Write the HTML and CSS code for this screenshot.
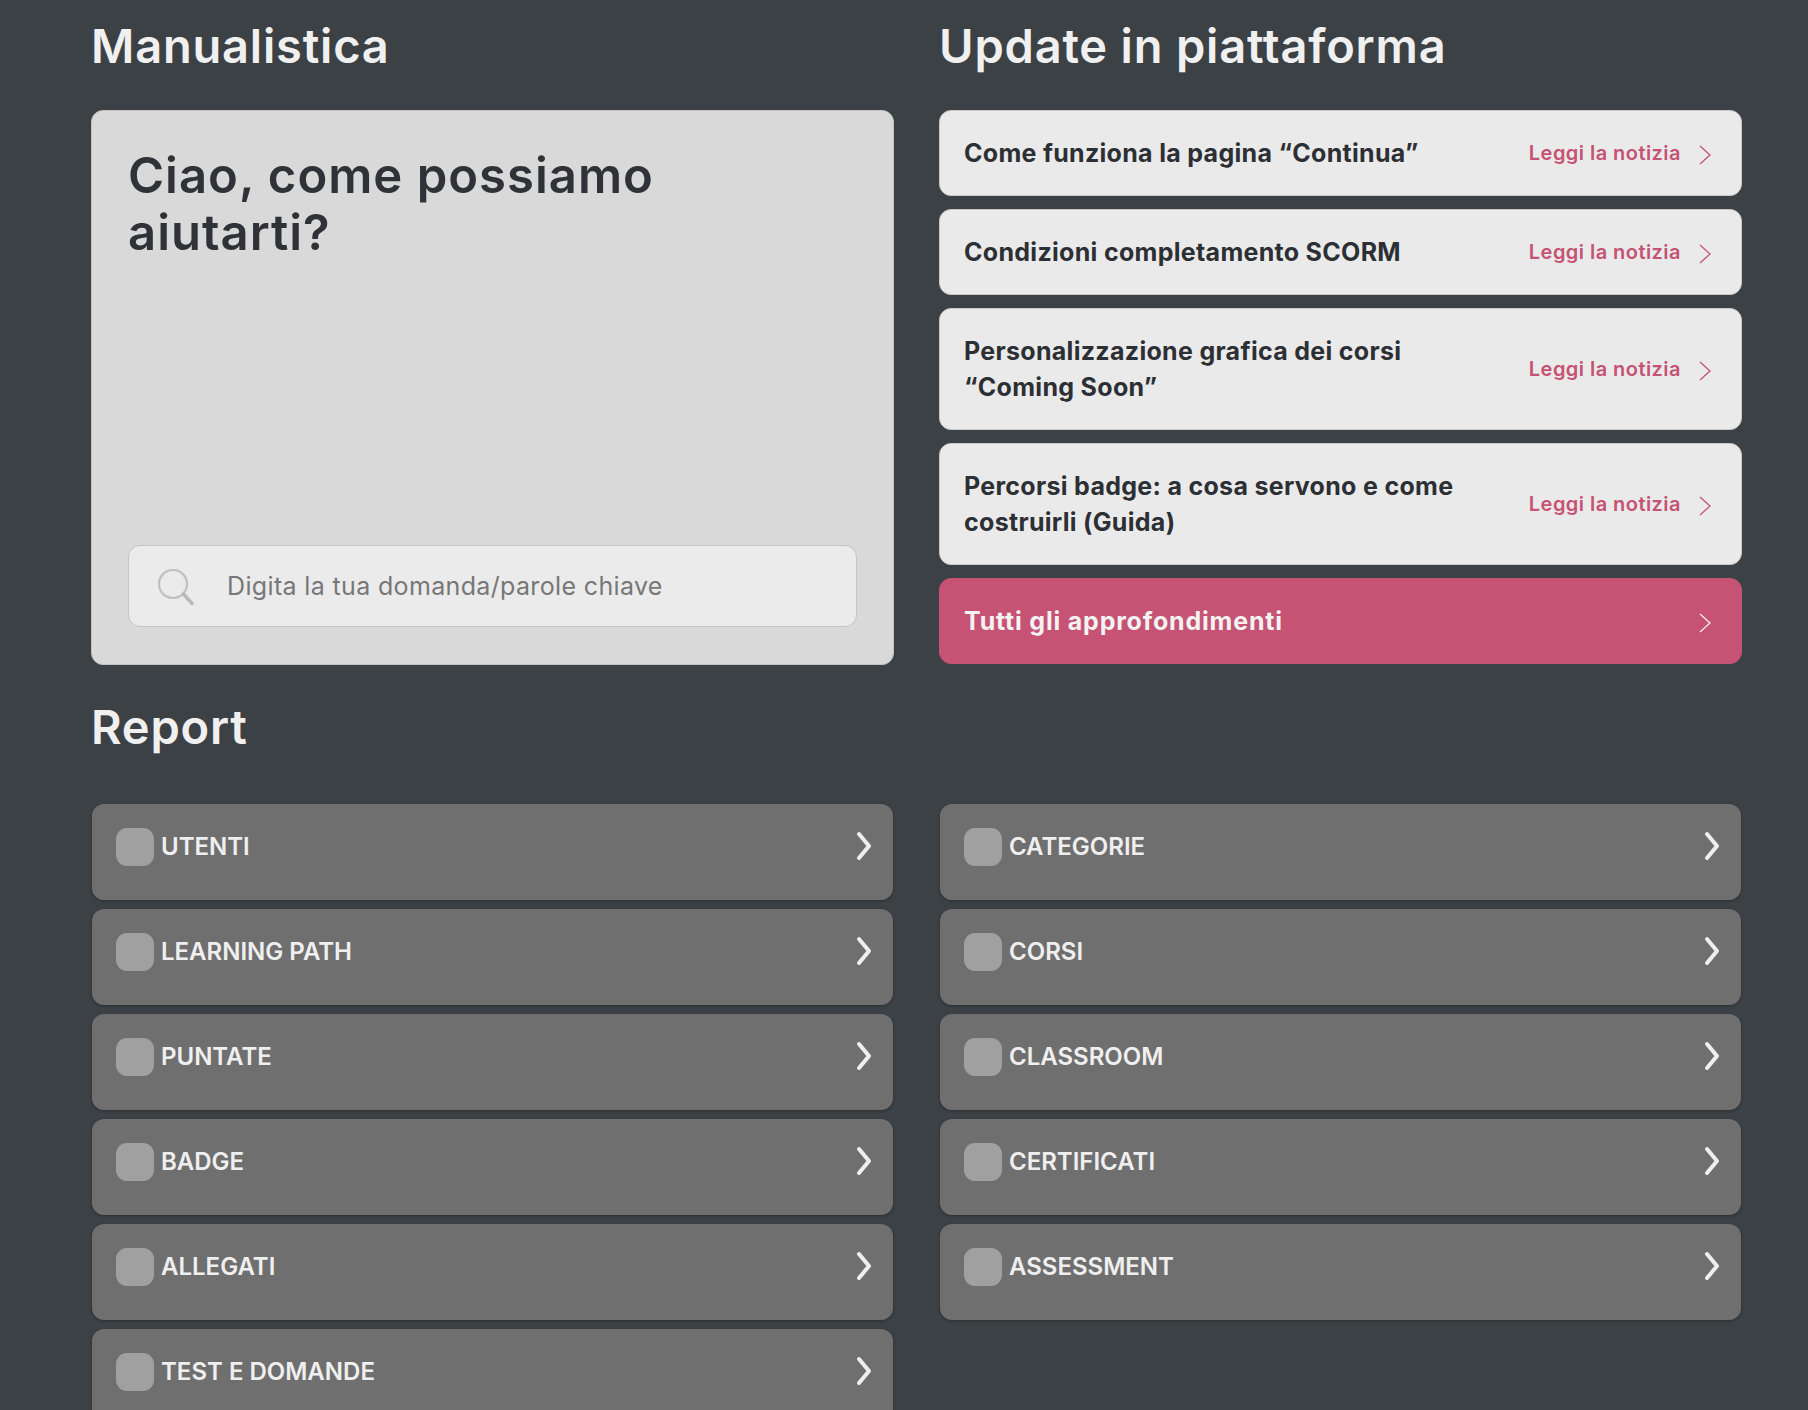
FILE: index.html
```html
<!DOCTYPE html>
<html lang="it">
<head>
  <meta charset="UTF-8" />
  <title>Manualistica</title>
  <link rel="stylesheet" href="styles.css">
</head>
<body>
  <div class="container">
    <section class="col">
      <h2>Manualistica</h2>
      <div class="help-card">
        <h1>Ciao, come possiamo aiutarti?</h1>
        <div class="search">
          <svg class="search-icon" viewBox="0 0 36 36" width="36" height="36"><circle cx="15" cy="15" r="14" fill="none" stroke="#c0c0c0" stroke-width="2.2"/><path d="M25.5 25 L34 34.5" stroke="#b8b8b8" stroke-width="3.5" stroke-linecap="round" fill="none"/></svg>
          <span>Digita la tua domanda/parole chiave</span>
        </div>
      </div>
    </section>
    <section class="col">
      <h2>Update in piattaforma</h2>
      <div class="news">
        <a class="news-item"><strong>Come funziona la pagina “Continua”</strong><span class="read">Leggi la notizia</span><svg class="chev" viewBox="0 0 12 20" width="12" height="20"><path d="M1 1 L11 10 L1 19" fill="none" stroke="currentColor" stroke-width="1.3"/></svg></a>
        <a class="news-item"><strong>Condizioni completamento SCORM</strong><span class="read">Leggi la notizia</span><svg class="chev" viewBox="0 0 12 20" width="12" height="20"><path d="M1 1 L11 10 L1 19" fill="none" stroke="currentColor" stroke-width="1.3"/></svg></a>
        <a class="news-item"><strong>Personalizzazione grafica dei corsi “Coming Soon”</strong><span class="read">Leggi la notizia</span><svg class="chev" viewBox="0 0 12 20" width="12" height="20"><path d="M1 1 L11 10 L1 19" fill="none" stroke="currentColor" stroke-width="1.3"/></svg></a>
        <a class="news-item"><strong>Percorsi badge: a cosa servono e come costruirli (Guida)</strong><span class="read">Leggi la notizia</span><svg class="chev" viewBox="0 0 12 20" width="12" height="20"><path d="M1 1 L11 10 L1 19" fill="none" stroke="currentColor" stroke-width="1.3"/></svg></a>
        <a class="news-item all"><strong>Tutti gli approfondimenti</strong><svg class="chev" viewBox="0 0 12 20" width="12" height="20"><path d="M1 1 L11 10 L1 19" fill="none" stroke="currentColor" stroke-width="1.3"/></svg></a>
      </div>
    </section>
    <section class="report">
      <h2>Report</h2>
      <div class="report-grid">
        <a class="report-item"><i></i><span>UTENTI</span><svg class="rchev" viewBox="0 0 16 30" width="16" height="30"><path d="M3 3 L13 15 L3 27" fill="none" stroke="currentColor" stroke-width="4" stroke-linecap="round" stroke-linejoin="round"/></svg></a>
        <a class="report-item"><i></i><span>CATEGORIE</span><svg class="rchev" viewBox="0 0 16 30" width="16" height="30"><path d="M3 3 L13 15 L3 27" fill="none" stroke="currentColor" stroke-width="4" stroke-linecap="round" stroke-linejoin="round"/></svg></a>
        <a class="report-item"><i></i><span>LEARNING PATH</span><svg class="rchev" viewBox="0 0 16 30" width="16" height="30"><path d="M3 3 L13 15 L3 27" fill="none" stroke="currentColor" stroke-width="4" stroke-linecap="round" stroke-linejoin="round"/></svg></a>
        <a class="report-item"><i></i><span>CORSI</span><svg class="rchev" viewBox="0 0 16 30" width="16" height="30"><path d="M3 3 L13 15 L3 27" fill="none" stroke="currentColor" stroke-width="4" stroke-linecap="round" stroke-linejoin="round"/></svg></a>
        <a class="report-item"><i></i><span>PUNTATE</span><svg class="rchev" viewBox="0 0 16 30" width="16" height="30"><path d="M3 3 L13 15 L3 27" fill="none" stroke="currentColor" stroke-width="4" stroke-linecap="round" stroke-linejoin="round"/></svg></a>
        <a class="report-item"><i></i><span>CLASSROOM</span><svg class="rchev" viewBox="0 0 16 30" width="16" height="30"><path d="M3 3 L13 15 L3 27" fill="none" stroke="currentColor" stroke-width="4" stroke-linecap="round" stroke-linejoin="round"/></svg></a>
        <a class="report-item"><i></i><span>BADGE</span><svg class="rchev" viewBox="0 0 16 30" width="16" height="30"><path d="M3 3 L13 15 L3 27" fill="none" stroke="currentColor" stroke-width="4" stroke-linecap="round" stroke-linejoin="round"/></svg></a>
        <a class="report-item"><i></i><span>CERTIFICATI</span><svg class="rchev" viewBox="0 0 16 30" width="16" height="30"><path d="M3 3 L13 15 L3 27" fill="none" stroke="currentColor" stroke-width="4" stroke-linecap="round" stroke-linejoin="round"/></svg></a>
        <a class="report-item"><i></i><span>ALLEGATI</span><svg class="rchev" viewBox="0 0 16 30" width="16" height="30"><path d="M3 3 L13 15 L3 27" fill="none" stroke="currentColor" stroke-width="4" stroke-linecap="round" stroke-linejoin="round"/></svg></a>
        <a class="report-item"><i></i><span>ASSESSMENT</span><svg class="rchev" viewBox="0 0 16 30" width="16" height="30"><path d="M3 3 L13 15 L3 27" fill="none" stroke="currentColor" stroke-width="4" stroke-linecap="round" stroke-linejoin="round"/></svg></a>
        <a class="report-item"><i></i><span>TEST E DOMANDE</span><svg class="rchev" viewBox="0 0 16 30" width="16" height="30"><path d="M3 3 L13 15 L3 27" fill="none" stroke="currentColor" stroke-width="4" stroke-linecap="round" stroke-linejoin="round"/></svg></a>
      </div>
    </section>
  </div>
</body>
</html>
```

FILE: styles.css
```css
* {
  margin: 0;
  padding: 0;
  box-sizing: border-box;
}

html, body {
  height: 1410px;
  overflow: hidden;
  background: #3c4145;
  font-family: "Inter", "Open Sans", sans-serif;
}

.container {
  display: grid;
  grid-template-columns: 803px 803px;
  column-gap: 45px;
  padding: 0 66px 0 91px;
}

h2 {
  font-size: 47px;
  font-weight: 600;
  letter-spacing: 0.8px;
  line-height: 56px;
  color: #f0f0f0;
  padding-top: 18px;
  margin-bottom: 36px;
}

.help-card {
  height: 555px;
  background: #d9d9d9;
  border: 1px solid #c2c2c2;
  border-radius: 12px;
  padding: 36px 36px 37px;
  display: flex;
  flex-direction: column;
  justify-content: space-between;
}

.help-card h1 {
  max-width: 620px;
  font-size: 49px;
  font-weight: 600;
  letter-spacing: 1px;
  line-height: 57px;
  color: #2f3236;
}

.search {
  height: 82px;
  background: #ebebeb;
  border: 1px solid #c4c4c4;
  border-radius: 12px;
  display: flex;
  align-items: center;
  gap: 33px;
  padding-left: 29px;
  font-size: 25px;
  letter-spacing: 0.35px;
  color: #777;
}

.search-icon {
  margin-top: 2px;
}

.news {
  display: flex;
  flex-direction: column;
  gap: 13px;
}

.news-item {
  min-height: 86px;
  background: #eaeaea;
  border: 1px solid #c8c8c8;
  border-radius: 12px;
  display: flex;
  align-items: center;
  padding: 24px 30px 24px 24px;
  color: #c65274;
}

.news-item strong {
  flex: 1;
  max-width: 510px;
  font-size: 25px;
  letter-spacing: 0.3px;
  line-height: 36px;
  font-weight: 700;
  color: #2c2f33;
}

.read {
  margin-left: auto;
  font-size: 20px;
  letter-spacing: 0.45px;
  font-weight: 600;
  margin-right: 18px;
}

.chev {
  margin-top: 3px;
}

.news-item.all {
  background: #c65274;
  border-color: #c65274;
  color: #eee;
  justify-content: space-between;
}

.news-item.all strong {
  letter-spacing: 0.8px;
  color: #f2f2f2;
}

.report {
  grid-column: 1 / 3;
}

.report h2 {
  padding-top: 34px;
  margin-bottom: 49px;
}

.report-grid {
  display: grid;
  grid-template-columns: 801px 801px;
  column-gap: 47px;
  row-gap: 9px;
  padding-left: 1px;
}

.report-item {
  height: 96px;
  background: #6f6f6f;
  border-radius: 12px;
  box-shadow: 0 1px 3px rgba(0,0,0,0.3);
  display: flex;
  align-items: flex-start;
  padding: 24px 21px 0 24px;
  color: #efefef;
}

.report-item i {
  width: 38px;
  height: 38px;
  border-radius: 11px;
  background: #a0a0a0;
  margin-right: 7px;
}

.report-item span {
  font-size: 24px;
  font-weight: 600;
  line-height: 38px;
}

.rchev {
  margin-left: auto;
  margin-top: 3px;
}
```
